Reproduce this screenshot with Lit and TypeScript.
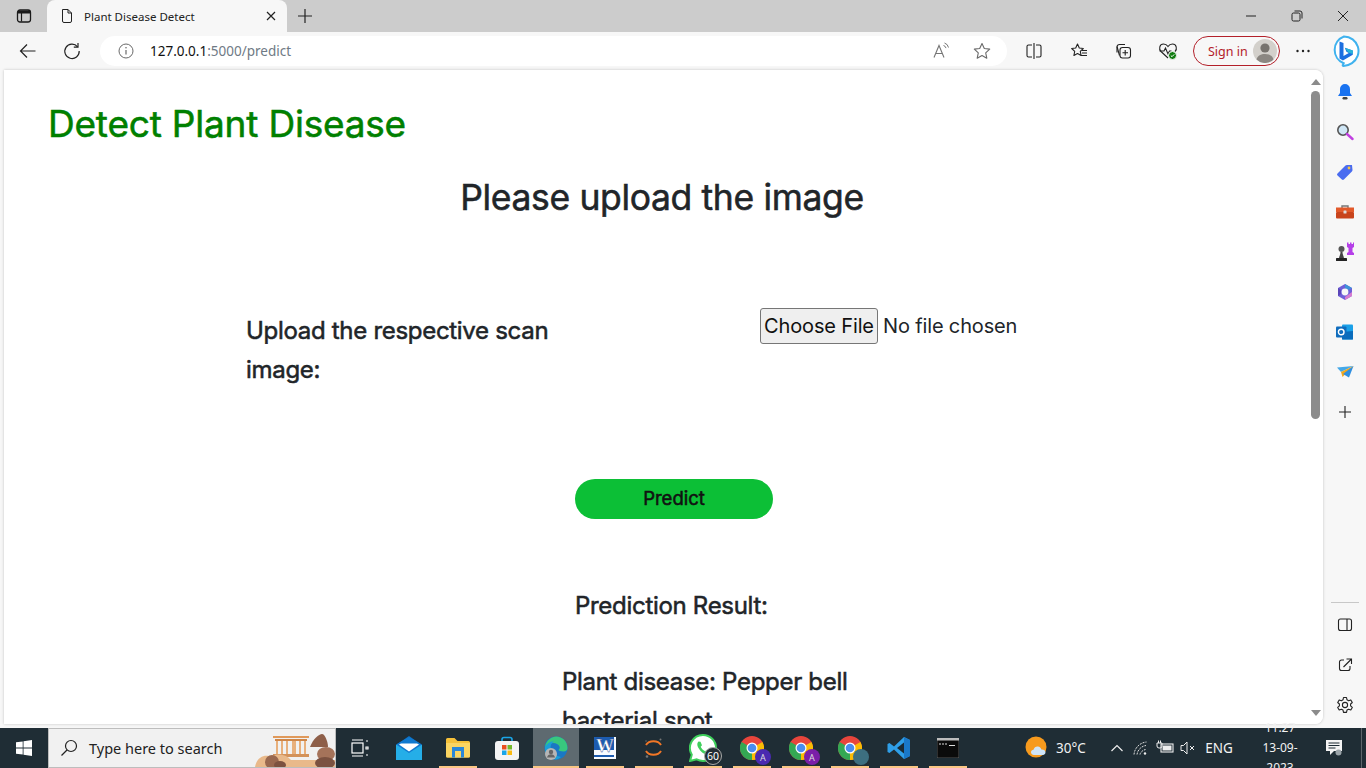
import { LitElement, html, css, svg } from "lit";
import { customElement } from "lit/decorators.js";

const ic = (w: number, body: unknown, vb = "0 0 24 24") =>
  html`<svg width=${w} height=${w} viewBox=${vb} fill="none">${body}</svg>`;

const st = { stroke: "#1f1f1f", "stroke-width": 1.2 };

const I = {
  tabs: ic(16, svg`<rect x="1.5" y="2" width="13" height="12" rx="2.5" stroke="#1a1a1a" stroke-width="1.3"/><rect x="2" y="2.5" width="12" height="3" fill="#1a1a1a"/><path d="M5.5 5v8.5" stroke="#1a1a1a" stroke-width="1.2"/>`, "0 0 16 16"),
  doc: ic(16, svg`<path d="M3.5 1.5h5.5l3.5 3.5v8a1.5 1.5 0 0 1-1.5 1.5H5a1.5 1.5 0 0 1-1.5-1.5z M9 1.5V5h3.5" stroke="#222" stroke-width="1"/>`, "0 0 16 16"),
  x: ic(12, svg`<path d="M2 2l8 8M10 2l-8 8" stroke="#222" stroke-width="1.2"/>`, "0 0 12 12"),
  plus: ic(16, svg`<path d="M8 1v14M1 8h14" stroke="#222" stroke-width="1.2"/>`, "0 0 16 16"),
  min: ic(12, svg`<path d="M1 6h10" stroke="#222" stroke-width="1"/>`, "0 0 12 12"),
  max: ic(12, svg`<rect x="1" y="3" width="8" height="8" rx="1.5" stroke="#222"/><path d="M3.5 1h5.5A2 2 0 0 1 11 3v5.5" stroke="#222"/>`, "0 0 12 12"),
  close: ic(12, svg`<path d="M1 1l10 10M11 1L1 11" stroke="#222" stroke-width="1"/>`, "0 0 12 12"),
  back: ic(18, svg`<path d="M16.5 9H1.5M8 2.5L1.5 9 8 15.5" stroke="#222" stroke-width="1.2"/>`, "0 0 18 18"),
  reload: ic(18, svg`<path d="M14.6 4.8A7.2 7.2 0 1 0 16.2 9" stroke="#222" stroke-width="1.2"/><path d="M15 1v4.2h-4.2" stroke="#222" stroke-width="1.2"/>`, "0 0 18 18"),
  info: ic(16, svg`<circle cx="8" cy="8" r="7" stroke="#6a6a6a"/><path d="M8 7v4.5" stroke="#6a6a6a" stroke-width="1.2"/><circle cx="8" cy="4.8" r=".8" fill="#6a6a6a"/>`, "0 0 16 16"),
  read: ic(18, svg`<path d="M1 15.5L6 3.5l5 12M2.8 11.5h6.4" stroke="#757575" stroke-width="1.1"/><path d="M10.5 3.5a3.5 3.5 0 0 1 2.5 2.6M11.5 1a6 6 0 0 1 4 4.5" stroke="#757575" stroke-width="1"/>`, "0 0 18 18"),
  star: ic(18, svg`<path d="M9 1.5l2.3 5 5.4.6-4 3.7 1.1 5.4L9 13.5 4.2 16.200l1.100-5.400-4-3.700 5.400-.6z" stroke="#6a6a6a" stroke-width="1.1" stroke-linejoin="round"/>`, "0 0 18 18"),
  split: ic(18, svg`<path d="M7 3H3.500A1.500 1.500 0 0 0 2 4.500v9A1.500 1.500 0 0 0 3.500 15H7M11 3h3.500A1.500 1.500 0 0 1 16 4.500v9a1.500 1.500 0 0 1-1.500 1.500H11M9 1v16" stroke="#222" stroke-width="1.100"/>`, "0 0 18 18"),
  favs: ic(18, svg`<path d="M7.500 2l1.800 4 4 .5-3 2.800.8 4.200-3.600-2-3.600 2 .8-4.200-3-2.800 4-.5z" stroke="#222" stroke-width="1.100" stroke-linejoin="round"/><path d="M12 8.500h5M12 11h5M11 13.500h6" stroke="#222" stroke-width="1.100"/>`, "0 0 18 18"),
  coll: ic(18, svg`<path d="M3 10.500V5a2.500 2.500 0 0 1 2.500-2.500H11" stroke="#222" stroke-width="1.100"/><path d="M3 4.500l2.500 9" stroke="#222" stroke-width="1.100"/><rect x="6" y="5.500" width="10.500" height="10.500" rx="2.500" stroke="#222" stroke-width="1.100"/><path d="M11.200 8v5.500M8.500 10.700H14" stroke="#222" stroke-width="1.100"/>`, "0 0 18 18"),
  heart: html`<svg width="20" height="20" viewBox="0 0 20 20" fill="none"><path d="M10 17L3 10.500C.5 8 1.500 3 5.500 3c2 0 3.500 1 4.500 2.500C11 4 12.500 3 14.500 3c4 0 5 5 2.500 7.500" stroke="#222" stroke-width="1.100"/><path d="M1.500 10h4.500l1.500-3 2.500 6 1.500-3h2" stroke="#222" stroke-width="1.100"/><circle cx="14.500" cy="14.500" r="4" fill="#107c10" stroke="#f7f7f7"/><path d="M12.800 14.500l1.200 1.200 2.200-2.300" stroke="#fff" stroke-width="1"/></svg>`,
  avatar: html`<svg width="24" height="24" viewBox="0 0 24 24"><circle cx="12" cy="12" r="12" fill="#d3d0cb"/><circle cx="12" cy="9" r="4.600" fill="#77736e"/><path d="M3.500 20.500c1-4 4.500-5.500 8.500-5.500s7.500 1.500 8.500 5.500a12 12 0 0 1-17 0z" fill="#8b8782"/></svg>`,
  dots: ic(16, svg`<circle cx="2.500" cy="8" r="1.200" fill="#222"/><circle cx="8" cy="8" r="1.200" fill="#222"/><circle cx="13.500" cy="8" r="1.200" fill="#222"/>`, "0 0 16 16"),
  bing: html`<svg width="32" height="32" viewBox="0 0 32 32" fill="none"><path d="M16 1.500a14.500 14.500 0 0 1 8 26.600c-2 1.300-5 2.400-8.500 2.900-.8 0-1-.6-.6-1.200l.8-1.600A14.300 14.300 0 0 1 16 1.500z" fill="#fff" stroke="#3fb2ee" stroke-width="2"/><path d="M11.500 6.500l4 1.500v13l5.300-3-2.400-1.200-1.600-4 8 2.800v4.100l-9.900 5.700-3.400-2z" fill="#1d6fe0"/><path d="M16.800 12.800l8 2.800v3.500l-4.300-1.300z" fill="#27b5d8"/></svg>`,
  bell: html`<svg width="18" height="18" viewBox="0 0 18 18"><path d="M9 1a5 5 0 0 0-5 5v4l-2 3h14l-2-3V6a5 5 0 0 0-5-5z" fill="#1a73f0"/><rect x="6.500" y="14" width="5" height="2.500" rx="1.200" fill="#444"/></svg>`,
  search: html`<svg width="18" height="18" viewBox="0 0 18 18" fill="none"><circle cx="7" cy="7" r="5.200" fill="#cfe6f5" stroke="#555" stroke-width="1.600"/><path d="M11 11l5.500 5" stroke="#c040e0" stroke-width="2.400" stroke-linecap="round"/></svg>`,
  tag: html`<svg width="18" height="18" viewBox="0 0 18 18"><path d="M1.500 10.500L9.500 2.500a2 2 0 0 1 1.500-.6l5 .2.500 5a2 2 0 0 1-.6 1.500l-8 8a1.500 1.500 0 0 1-2 0l-4.400-4a1.500 1.500 0 0 1 0-2.100z" fill="#4a6cf0"/><circle cx="13" cy="5" r="1.400" fill="#f6c343"/></svg>`,
  tool: html`<svg width="18" height="18" viewBox="0 0 18 18" fill="none"><path d="M6 5V3h6v2" stroke="#777" stroke-width="1.400"/><rect y="4.500" width="18" height="4.500" fill="#e2592a"/><rect y="9" width="18" height="6.500" rx="1" fill="#c8441c"/><rect x="7.500" y="7.500" width="3" height="3" rx=".6" fill="#ddd"/></svg>`,
  chess: html`<svg width="20" height="20" viewBox="0 0 20 20"><circle cx="6.500" cy="7" r="3" fill="#555"/><path d="M4 17c0-3 1.500-4 1.500-7h2C7.500 13 9 14 9 17z" fill="#444"/><rect x="1" y="16" width="11" height="3" rx=".6" fill="#222"/><path d="M12 .5h1.500v1.500h1.500V.5h1.500V2h1.500V.5H19V5l-1.500 1v4l1.500 1v2h-7v-2l1.500-1V6L12 5z" fill="#b53fe8"/></svg>`,
  m365: html`<svg width="18" height="18" viewBox="0 0 18 18" fill="none"><path d="M9 1L2 5v8l7 4 7-4V5z" fill="#6f5fd8"/><path d="M9 1l7 4-3.500 2L9 5z" fill="#3e93d8"/><path d="M16 9v4l-7 4 0-3z" fill="#d67bd0"/><path d="M2 5v8l3-2V7z" fill="#5a45b8"/><circle cx="9" cy="9" r="3.400" fill="#f7f7f7"/></svg>`,
  outlook: html`<svg width="18" height="18" viewBox="0 0 18 18"><rect x="6" y="1.500" width="11" height="15" rx="1" fill="#1aa0e8"/><path d="M6 9l11-1v8.500H6z" fill="#0a6cbc"/><rect x="0" y="3.500" width="10.500" height="11" rx="1" fill="#0f6cbd"/><circle cx="5.200" cy="9" r="2.800" fill="none" stroke="#fff" stroke-width="1.400"/></svg>`,
  send: html`<svg width="18" height="18" viewBox="0 0 18 18"><path d="M1 4.500L17.500 3 5 9z" fill="#45a8e8"/><path d="M17.500 3L5 9l1.500 5z" fill="#f2a81d"/><path d="M17.500 3L7 11l6 3.500z" fill="#2f8fe0"/></svg>`,
  sideplus: ic(14, svg`<path d="M7 1v12M1 7h12" stroke="#222" stroke-width="1.100"/>`, "0 0 14 14"),
  panel: ic(16, svg`<rect x="1.500" y="2" width="13" height="11.500" rx="2" stroke="#222" stroke-width="1.100"/><path d="M10 2v11.500" stroke="#222" stroke-width="1.100"/>`, "0 0 16 16"),
  ext: ic(16, svg`<path d="M7 3H4.500A2 2 0 0 0 2.500 5v6.500a2 2 0 0 0 2 2H11a2 2 0 0 0 2-2V9" stroke="#222" stroke-width="1.100"/><path d="M6.500 10L14 2.500M9.500 2h5v5" stroke="#222" stroke-width="1.100"/>`, "0 0 16 16"),
  gear: ic(18, svg`<circle cx="9" cy="9" r="2.600" stroke="#222" stroke-width="1.100"/><path d="M7.500 1.500h3l.5 2.300 1.600.9 2.200-.8 1.500 2.600-1.700 1.500v1.900l1.700 1.500-1.500 2.600-2.200-.8-1.600.9-.5 2.300h-3l-.5-2.300-1.600-.9-2.200.8-1.500-2.600 1.700-1.500V8L1.700 6.500l1.500-2.600 2.200.8L7 3.800z" stroke="#222" stroke-width="1.100" stroke-linejoin="round"/>`, "0 0 18 18"),
  win: html`<svg width="16" height="16" viewBox="0 0 16 16"><path d="M0 2.300l6.700-.9v6.200H0zM7.500 1.300L16 0v7.600H7.500zM0 8.400h6.700v6.200L0 13.700zM7.500 8.400H16V16l-8.500-1.200z" fill="#fff"/></svg>`,
  lens: ic(18, svg`<circle cx="11" cy="7" r="5.500" stroke="#222" stroke-width="1.200"/><path d="M7 11l-5.500 5.500" stroke="#222" stroke-width="1.200"/>`, "0 0 18 18"),
  temple: html`<svg width="80" height="40" viewBox="0 0 80 40"><path d="M18 9h36v2H18z" fill="#e0995a"/><path d="M20 12h32v2H20z" fill="#cf8648"/><g fill="#e8b07c"><rect x="21" y="14" width="2" height="13"/><rect x="26" y="14" width="2" height="13"/><rect x="31" y="14" width="2" height="13"/><rect x="37" y="14" width="4" height="13"/><rect x="44" y="14" width="2" height="13"/><rect x="49" y="14" width="2" height="13"/></g><path d="M18 27h36v3H18z" fill="#d3925a"/><path d="M0 40c2-11 11-13 16-10 4-4 15-3 20 3l44 0v7z" fill="#e9b98a"/><ellipse cx="17" cy="35" rx="7" ry="7" fill="#99684f"/><ellipse cx="25" cy="38" rx="6" ry="4" fill="#7c5240"/><path d="M55 20c3-8 9-13 12-13s6 8 6 13z" fill="#8e5f49"/><ellipse cx="71" cy="27" rx="9" ry="7" fill="#a5735a"/><ellipse cx="70" cy="36" rx="10" ry="6" fill="#7b5140"/></svg>`,
  taskview: ic(20, svg`<rect x="2" y="5" width="11" height="10" stroke="#fff" stroke-width="1.200"/><path d="M2 2h11M2 18h11M16 3h2M16 9h2v2h-2zM16 17h2" stroke="#fff" stroke-width="1.200"/>`, "0 0 20 20"),
  mail: html`<svg width="26" height="24" viewBox="0 0 26 24"><path d="M13 0L0 9v13h26V9z" fill="#0b6fc4"/><rect y="9" width="26" height="15" fill="#25aee8"/><path d="M0 8.500L13 17l13-8.500L13 1z" fill="#0f79cf"/><path d="M3 8.500l10 7 10-7-2-1H5z" fill="#fff"/></svg>`,
  folder: html`<svg width="24" height="20" viewBox="0 0 24 20"><path d="M0 1.500A1.500 1.500 0 0 1 1.500 0h7l3 3H22.500A1.500 1.500 0 0 1 24 4.500V18a1.500 1.500 0 0 1-1.500 1.500h-21A1.500 1.500 0 0 1 0 18z" fill="#f6c13a"/><path d="M0 5h24v13a1.500 1.500 0 0 1-1.500 1.500h-21A1.500 1.500 0 0 1 0 18z" fill="#fbd562"/><rect x="6" y="9" width="12" height="10.500" fill="#2a87d8"/><rect x="9" y="13" width="6" height="6.500" fill="#fbd562"/></svg>`,
  store: html`<svg width="24" height="24" viewBox="0 0 24 24" fill="none"><path d="M7 6V3.500A2 2 0 0 1 9 1.500h6a2 2 0 0 1 2 2V6" stroke="#1aa6e8" stroke-width="1.600"/><rect y="5" width="24" height="19" rx="3" fill="#f4f4f4"/><rect x="7" y="9" width="4.500" height="4.500" fill="#e94f1f"/><rect x="12.500" y="9" width="4.500" height="4.500" fill="#73b92a"/><rect x="7" y="14.500" width="4.500" height="4.500" fill="#1aa6e8"/><rect x="12.500" y="14.500" width="4.500" height="4.500" fill="#fbbb11"/></svg>`,
  edge: html`<svg width="24" height="24" viewBox="0 0 24 24"><circle cx="12" cy="12" r="11.500" fill="#1a78c4"/><path d="M1 11C2 4 8 .5 12 .5c6.500 0 11.500 5 11.500 11.500 0 2-1.500 3.500-4 3.500-3 0-5-1-5-1.500 1-1 1.500-2 1-3.500C14 7 9 6 6 8s-5 3-5 3z" fill="#38c77e"/><path d="M1 11c2-4 6-6 9-5.500C7 7 6 10 7 13c1 4 5 7 10 8-2 1.500-3.500 2.500-5 2.500C5 23.500.5 18 1 11z" fill="#1a9fd8"/><circle cx="7" cy="18" r="6" fill="#b6b6b6"/><circle cx="7" cy="16" r="2.200" fill="#666"/><path d="M3 21.500c.5-2.500 2-3.200 4-3.200s3.500.7 4 3.200z" fill="#666"/></svg>`,
  word: html`<svg width="22" height="22" viewBox="0 0 22 22"><rect width="22" height="22" fill="#f8fbff"/><rect x="0" y="0" width="20" height="13" fill="#1c5cb0"/><rect x="0" y="18" width="20" height="2" fill="#1c5cb0"/><text x="2" y="15" font-family="Liberation Serif" font-weight="700" font-size="18" fill="#fff" stroke="#1c3f8c" stroke-width=".4">W</text></svg>`,
  arc: html`<svg width="24" height="24" viewBox="0 0 24 24" fill="none"><path d="M4 9c3-5 12-5 15 0" stroke="#f37726" stroke-width="2"/><path d="M4 15c3 5 12 5 15 0" stroke="#f37726" stroke-width="2"/><circle cx="18.500" cy="3.500" r="1" fill="#777"/><circle cx="5" cy="20.500" r="1.300" fill="#777"/><circle cx="4" cy="5" r=".7" fill="#777"/></svg>`,
  wa: html`<svg width="28" height="28" viewBox="0 0 28 28"><path d="M14 1a13 13 0 0 1 0 26c-2.300 0-4.400-.6-6.300-1.600L1 27l1.800-6.300A13 13 0 0 1 14 1z" fill="#fff" stroke="#3fcf5c" stroke-width="2"/><path d="M9.500 7.500c-1 1-2 3 0 6.500s5 6 8 6.500c2 .3 3.500-1.500 3.500-3l-3.300-1.700-1.500 1.500c-1.500-.5-4-3-4.500-4.500l1.300-1.500-1.500-3.500z" fill="#3fcf5c"/></svg>`,
  vscode: html`<svg width="24" height="24" viewBox="0 0 24 24"><path d="M17 1l6 3v16l-6 3L7 13.500 2.500 17 .5 16V8l2-1L7 10.500z" fill="#2f9fe8"/><path d="M17 6.500L10 12l7 5.500z" fill="#1a2a33"/><path d="M17 1l6 3v16l-6 3z" fill="#1a78c8"/></svg>`,
  term: html`<svg width="22" height="20" viewBox="0 0 22 20"><rect width="22" height="20" fill="#0b0b0b" stroke="#888" stroke-width=".6"/><rect width="22" height="2.500" fill="#bdbdbd"/><path d="M2 6h2M5 6h2M8 6h2M12 7.500h6" stroke="#ddd" stroke-width="1"/></svg>`,
  sun: html`<svg width="24" height="24" viewBox="0 0 24 24"><circle cx="11" cy="11" r="10.500" fill="#f79a1d"/><path d="M9 19c-2 0-3-1.500-3-2.700 0-1.300 1-2.500 2.500-2.500.5-2.300 2.500-3.500 4.300-3.300 2 .2 3.200 1.500 3.500 3 2.500-.2 4.200 1 4.200 2.800S19 19 18 19z" fill="#cfe4f8"/></svg>`,
  chev: ic(14, svg`<path d="M1.500 10L7 4.500 12.500 10" stroke="#eee" stroke-width="1.200"/>`, "0 0 14 14"),
  wifi: ic(16, svg`<path d="M1 14.500C1.500 8 7 2.500 13.500 2M4 14.500C4.500 10 8.500 6 13 5.500M7 14.500c.5-2.500 3-4.500 5.500-5" stroke="#ddd" stroke-width="1" stroke-dasharray="2 1"/><circle cx="12" cy="13.500" r="1.200" fill="#eee"/>`, "0 0 16 16"),
  batt: ic(18, svg`<rect x="5" y="5" width="12" height="8" stroke="#eee" stroke-width="1.100"/><rect x="6.500" y="6.500" width="9" height="5" fill="#eee"/><path d="M1 4h5v3a2 2 0 0 1-2 2H3a2 2 0 0 1-2-2zM2.500 1.500V4M4.500 1.500V4" stroke="#eee" stroke-width="1"/>`, "0 0 18 18"),
  vol: ic(16, svg`<path d="M1 5.500h2.500L7 2v12l-3.500-3.500H1z" stroke="#eee"/><path d="M10 6l4 4M14 6l-4 4" stroke="#eee"/>`, "0 0 16 16"),
  notif: html`<svg width="18" height="18" viewBox="0 0 18 18"><path d="M1 1h16v11H9l-4 4v-4H1z" fill="#f4f4f4"/><path d="M3.500 4h11M3.500 6.500h11M3.500 9h7" stroke="#1c2b33" stroke-width="1"/><circle cx="13.500" cy="13.500" r="3" fill="#9aa3a8"/></svg>`,
};

const chromeIcon = (badge: unknown) => html`<span class="chrome"><svg width="24" height="24" viewBox="0 0 24 24"><circle cx="12" cy="12" r="12" fill="#e8453c"/><path d="M12 12L1.600 6A12 12 0 0 0 12 24z" fill="#34a853"/><path d="M12 12l10.400-6A12 12 0 0 1 12 24z" fill="#fbbc05"/><circle cx="12" cy="12" r="5.500" fill="#fff"/><circle cx="12" cy="12" r="4.300" fill="#4a8df0"/></svg>${badge}</span>`;

@customElement("app-root")
export class AppRoot extends LitElement {
  static styles = css`
    :host { display: flex; flex-direction: column; width: 1366px; height: 768px; overflow: hidden; background: #f7f7f7; font-family: "Noto Sans", "Open Sans", sans-serif; color: #222; }
    svg { display: block; flex: none; }
    button { font: inherit; }
    .strip { height: 32px; flex: none; background: #cccccc; display: flex; align-items: flex-end; }
    .tabtoggle { width: 47px; height: 32px; display: flex; align-items: center; justify-content: center; }
    .tab { width: 240px; height: 32px; background: #f7f7f7; border-radius: 8px 8px 0 0; display: flex; align-items: center; box-sizing: border-box; padding: 0 10px 0 12px; font-size: 11.5px; gap: 9px; color: #222; }
    .tab .title { flex: 1; }
    .newtab { width: 36px; height: 32px; display: flex; align-items: center; justify-content: center; }
    .winbtns { margin-left: auto; display: flex; height: 32px; }
    .winbtns span { width: 46px; display: flex; align-items: center; justify-content: center; }
    .tools { height: 38px; flex: none; display: flex; align-items: center; background: #f7f7f7; }
    .tb { width: 44px; height: 30px; display: flex; align-items: center; justify-content: center; }
    .addr { width: 907px; height: 30px; margin-left: 6px; box-sizing: border-box; background: #fff; border-radius: 15px; display: flex; align-items: center; padding: 0 16px 0 18px; font-size: 13.500px; }
    .url { margin-left: 16px; flex: 1; color: #111; }
    .url span { color: #6f7a85; }
    .addr .r { display: flex; gap: 22px; align-items: center; }
    .right { display: flex; align-items: center; margin-left: 5px; }
    .right .tb { width: 44.500px; }
    .signin { width: 87px; height: 30px; box-sizing: border-box; border: 1px solid #b3202a; border-radius: 15px; display: flex; align-items: center; justify-content: space-between; padding: 0 2px 0 14px; color: #b3202a; font-size: 12.500px; margin-left: 3px; }
    .more { width: 46px; display: flex; justify-content: center; }
    .bing { width: 32px; margin-left: 2px; }
    .mid { flex: 1; min-height: 0; display: flex; }
    .pagewrap { margin-left: 4px; width: 1319px; height: 654px; background: #fff; border-radius: 0 8px 8px 0; box-shadow: 0 0 3px rgba(0,0,0,.22); display: flex; overflow: hidden; }
    .page { flex: 1; min-width: 0; overflow: hidden; font-family: Inter, sans-serif; color: #212529; -webkit-text-stroke: .55px currentColor; }
    h1 { margin: 0; padding: 31px 0 0 44px; font-size: 37px; line-height: 46px; font-weight: 400; color: #008000; letter-spacing: -.2px; }
    h2 { margin: 0; padding: 28px 0 0 12px; font-size: 35.500px; line-height: 46px; font-weight: 400; text-align: center; letter-spacing: -.35px; }
    .row { display: flex; padding: 90px 0 0 242px; }
    .lab { width: 514px; font-size: 24px; line-height: 39px; letter-spacing: -.3px; }
    .lab div { width: 340px; }
    .file { display: flex; align-items: center; height: 36px; margin-top: -3px; font-size: 20px; -webkit-text-stroke: 0; letter-spacing: -.15px; }
    .choose { height: 36px; width: 118px; box-sizing: border-box; border: 1px solid #767676; border-radius: 3px; background: #efefef; color: #111; padding: 0; margin-right: 5px; font-size: 20px; letter-spacing: -.15px; font-family: Inter, sans-serif; }
    .predict { display: block; margin: 90px 0 0 571px; width: 198px; height: 40px; border: none; border-radius: 20px; background: #0cbf36; color: #111; font-family: Inter, sans-serif; font-size: 18.500px; padding: 0 0 3px; }
    h3 { margin: 0; padding: 67px 0 0 571px; font-size: 24px; line-height: 39px; font-weight: 400; letter-spacing: -.3px; }
    .res { margin: 37px 0 0 558px; width: 340px; font-size: 24px; line-height: 39px; letter-spacing: -.3px; }
    .sb { width: 15px; flex: none; display: flex; flex-direction: column; align-items: center; background: #fff; }
    .up { width: 0; height: 0; margin-top: 9px; border: 5px solid transparent; border-top: 0; border-bottom: 6px solid #8b8b8b; }
    .thumb { margin-top: 6px; width: 9px; height: 328px; border-radius: 5px; background: #8c8c8c; }
    .dn { width: 0; height: 0; margin-top: auto; margin-bottom: 8px; border: 5px solid transparent; border-bottom: 0; border-top: 6px solid #8b8b8b; }
    .side { flex: 1; display: flex; flex-direction: column; align-items: center; }
    .side > span { height: 40px; display: flex; align-items: center; justify-content: center; flex: none; }
    .side .first { margin-top: 2px; }
    .side hr { width: 28px; margin: auto 0 2px; border: 0; border-top: 1px solid #c8c8c8; }
    .side .last { margin-bottom: -1px; }
    .bar { height: 40px; flex: none; margin-top: 4px; background: #1f2d35; display: flex; align-items: stretch; color: #fff; }
    .start { width: 48px; display: flex; align-items: center; justify-content: center; }
    .searchbox { width: 288px; box-sizing: border-box; background: #f1f1f1; border: 1px solid #bdbdbd; border-width: 1px 1px 1px 1px; display: flex; align-items: center; padding-left: 11px; font-size: 14.500px; color: #222; gap: 11px; overflow: hidden; position: relative; }
    .searchbox .temple { position: absolute; right: 0; bottom: 0; }
    .apps { display: flex; gap: 3px; margin-left: 1px; }
    .app { width: 46px; display: flex; align-items: center; justify-content: center; position: relative; }
    .app.on { background: #5e6a70; }
    .app.u::after { content: ""; position: absolute; left: 4px; right: 4px; bottom: 0; height: 2px; background: #f9c684; }
    .app.on.u::after { left: 0; right: 0; }
    .badge { position: absolute; left: 24px; top: 19px; width: 18px; height: 18px; box-sizing: border-box; border-radius: 50%; border: 1px solid #aaa; background: #222d33; color: #fff; font-size: 10.500px; font-family: "Noto Sans", sans-serif; display: flex; align-items: center; justify-content: center; }
    .chrome { position: relative; display: block; }
    .ab { position: absolute; right: -7px; bottom: -5px; width: 16px; height: 16px; border-radius: 50%; background: #4a2ab0; color: #ddd; font-size: 9px; display: flex; align-items: center; justify-content: center; }
    .ab.p { background: #7a1fa8; }
    .ab.pic { background: #3d6f80; }
    .tray { margin-left: auto; display: flex; align-items: center; font-size: 13.500px; color: #f2f2f2; }
    .weather { display: flex; align-items: center; gap: 7px; width: 80px; }
    .tray .chev { margin-left: 0; }
    .ti { display: flex; justify-content: center; }
    .clock { width: 60px; text-align: center; font-size: 12px; line-height: 20px; margin-left: 11px; }
    .notif { width: 48px; display: flex; justify-content: center; margin-left: 0; }
    .showdesk { width: 5px; border-left: 1px solid #5c666b; height: 100%; box-sizing: border-box; margin-left: 3px; }
  `;

  render() {
    const apps: [unknown, boolean, boolean][] = [
      [I.taskview, false, false], [I.mail, false, false], [I.folder, true, false], [I.store, false, false],
      [I.edge, true, true], [I.word, true, false], [I.arc, true, false],
      [html`${I.wa}<span class="badge">60</span>`, true, false],
      [chromeIcon(html`<span class="ab">A</span>`), true, false],
      [chromeIcon(html`<span class="ab p">A</span>`), true, false],
      [chromeIcon(html`<span class="ab pic"></span>`), true, false],
      [I.vscode, true, false], [I.term, true, false],
    ];
    return html`
      <div class="strip">
        <div class="tabtoggle">${I.tabs}</div>
        <div class="tab">${I.doc}<span class="title">Plant Disease Detect</span>${I.x}</div>
        <div class="newtab">${I.plus}</div>
        <div class="winbtns"><span>${I.min}</span><span>${I.max}</span><span>${I.close}</span></div>
      </div>
      <div class="tools">
        <span class="tb" style="margin-left:6px">${I.back}</span>
        <span class="tb">${I.reload}</span>
        <div class="addr">${I.info}<span class="url">127.0.0.1<span>:5000/predict</span></span>
          <span class="r">${I.read}${I.star}</span></div>
        <div class="right">
          <span class="tb">${I.split}</span><span class="tb">${I.favs}</span><span class="tb">${I.coll}</span><span class="tb">${I.heart}</span>
          <div class="signin">Sign in ${I.avatar}</div>
          <span class="more">${I.dots}</span>
          <span class="bing">${I.bing}</span>
        </div>
      </div>
      <div class="mid">
        <div class="pagewrap">
          <div class="page">
            <h1>Detect Plant Disease</h1>
            <h2>Please upload the image</h2>
            <div class="row">
              <div class="lab"><div>Upload the respective scan image:</div></div>
              <div class="file"><button class="choose">Choose File</button>No file chosen</div>
            </div>
            <button class="predict">Predict</button>
            <h3>Prediction Result:</h3>
            <div class="res">Plant disease: Pepper bell bacterial spot</div>
          </div>
          <div class="sb"><i class="up"></i><i class="thumb"></i><i class="dn"></i></div>
        </div>
        <div class="side">
          <span class="first">${I.bell}</span><span>${I.search}</span><span>${I.tag}</span><span>${I.tool}</span><span>${I.chess}</span><span>${I.m365}</span><span>${I.outlook}</span><span>${I.send}</span><span>${I.sideplus}</span>
          <hr />
          <span>${I.panel}</span><span>${I.ext}</span><span class="last">${I.gear}</span>
        </div>
      </div>
      <div class="bar">
        <div class="start">${I.win}</div>
        <div class="searchbox">${I.lens}<span>Type here to search</span><span class="temple">${I.temple}</span></div>
        <div class="apps">
          ${apps.map(([icon, u, on]) => html`<div class="app ${u ? "u" : ""} ${on ? "on" : ""}">${icon}</div>`)}
        </div>
        <div class="tray">
          <div class="weather">${I.sun}<span>30°C</span></div>
          <span class="ti" style="width:24px">${I.chev}</span>
          <span class="ti" style="width:24px">${I.wifi}</span>
          <span class="ti" style="width:24px">${I.batt}</span>
          <span class="ti" style="width:22px">${I.vol}</span>
          <span class="ti" style="width:40px">ENG</span>
          <div class="clock">11:27<br />13-09-2023</div>
          <div class="notif">${I.notif}</div>
          <div class="showdesk"></div>
        </div>
      </div>
    `;
  }
}
